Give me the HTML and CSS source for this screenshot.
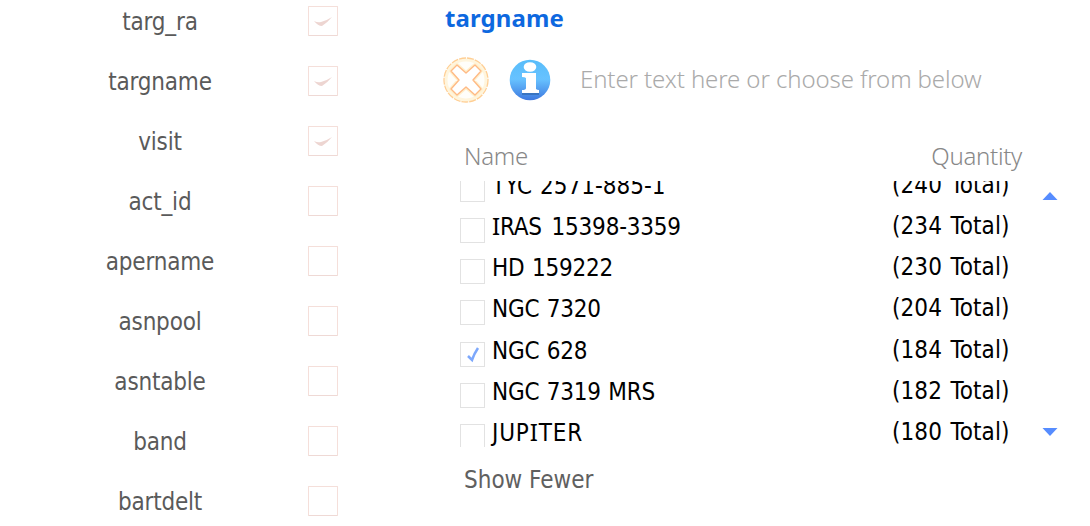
FILE: index.html
```html
<!DOCTYPE html>
<html lang="en">
<head>
<meta charset="utf-8">
<title>Column filters</title>
<link rel="stylesheet" href="styles.css">
</head>
<body>
<main class="page">
  <section class="columns">
    <div class="column-row"><span class="column-name">targ_ra</span><span class="box"><svg viewBox="0 0 28 28"><path class="tick" d="M5 14q4 2 7 1 5-1 11-5-4 5-10 9-4 0-8-5z"/></svg></span></div>
    <div class="column-row"><span class="column-name">targname</span><span class="box"><svg viewBox="0 0 28 28"><path class="tick" d="M5 14q4 2 7 1 5-1 11-5-4 5-10 9-4 0-8-5z"/></svg></span></div>
    <div class="column-row"><span class="column-name">visit</span><span class="box"><svg viewBox="0 0 28 28"><path class="tick" d="M5 14q4 2 7 1 5-1 11-5-4 5-10 9-4 0-8-5z"/></svg></span></div>
    <div class="column-row"><span class="column-name">act_id</span><span class="box"></span></div>
    <div class="column-row"><span class="column-name">apername</span><span class="box"></span></div>
    <div class="column-row"><span class="column-name">asnpool</span><span class="box"></span></div>
    <div class="column-row"><span class="column-name">asntable</span><span class="box"></span></div>
    <div class="column-row"><span class="column-name">band</span><span class="box"></span></div>
    <div class="column-row"><span class="column-name">bartdelt</span><span class="box"></span></div>
  </section>
  <section class="filter">
    <h1 class="title">targname</h1>
    <div class="search">
      <svg class="clear" viewBox="0 0 46 46">
        <circle class="clear-glow" cx="23" cy="23" r="20"/>
        <circle class="clear-ring" cx="23" cy="23" r="22"/>
        <path class="clear-halo" d="M14 8l9 8 9-8 6 6-8 9 8 9-6 6-9-8-9 8-6-6 8-9-8-9z"/>
        <path class="clear-cross" d="M14 8l9 8 9-8 6 6-8 9 8 9-6 6-9-8-9 8-6-6 8-9-8-9z"/>
      </svg>
      <svg class="info" viewBox="0 0 42 42">
        <defs><linearGradient id="blue" x2="0" y2="1"><stop offset="0" stop-color="#58bdfa"/><stop offset=".48" stop-color="#67c2ff"/><stop offset="1" stop-color="#3e78df"/></linearGradient></defs>
        <circle cx="21" cy="21" r="20.3" fill="url(#blue)"/>
        <path class="info-shadow" d="M13 34h17v2H13z"/>
        <ellipse class="info-mark" cx="21" cy="8" rx="6.3" ry="4.8"/>
        <path class="info-mark" d="M13 14h14v16q1 1 3 1v3H13v-3q4 0 4-2V19q-1-1-4-1z"/>
      </svg>
      <span class="placeholder">Enter text here or choose from below</span>
    </div>
    <div class="table-head"><span class="head-name">Name</span><span class="head-quantity">Quantity</span></div>
    <div class="viewport">
      <div class="rows">
        <div class="row"><span class="check"></span><span class="name">TYC 2571-885-1</span><span class="total">(240 Total)</span></div>
        <div class="row"><span class="check"></span><span class="name iras"><span class="slab">I</span>RAS 15398-3359</span><span class="total">(234 Total)</span></div>
        <div class="row"><span class="check"></span><span class="name tight">HD 159222</span><span class="total">(230 Total)</span></div>
        <div class="row"><span class="check"></span><span class="name tight">NGC 7320</span><span class="total">(204 Total)</span></div>
        <div class="row"><span class="check"><svg viewBox="0 0 23 23"><path class="blue-tick" d="M7 13l4 4q2-6 6-12"/></svg></span><span class="name tight">NGC 628</span><span class="total">(184 Total)</span></div>
        <div class="row"><span class="check"></span><span class="name tight">NGC 7319 MRS</span><span class="total">(182 Total)</span></div>
        <div class="row"><span class="check"></span><span class="name jupiter">JUP<span class="slab">I</span>TER</span><span class="total">(180 Total)</span></div>
      </div>
      <div class="scroll">
        <svg class="arrow" viewBox="0 0 16 8"><path d="M8 0l7.5 8H.5z"/></svg>
        <svg class="arrow" viewBox="0 0 16 8"><path d="M8 8L.5 0h15z"/></svg>
      </div>
    </div>
    <div class="fewer">Show Fewer</div>
  </section>
</main>
</body>
</html>
```
FILE: styles.css
```css
* { box-sizing: border-box; }
body { margin: 0; background: #fefefe; font: 24px/30px "DejaVu Sans Condensed", "Noto Sans", sans-serif; }
.page { display: grid; grid-template-columns: 443px 647px; height: 526px; overflow: hidden; background: #fff; }
svg { display: block; }
.columns { padding-top: 6px; display: flex; flex-direction: column; gap: 30px; }
.column-row { display: flex; height: 30px; flex: none; color: #5a5a5a; }
.column-name { width: 148px; margin: 0 74px 0 86px; line-height: 32px; letter-spacing: -.2px; text-align: center; white-space: nowrap; }
.box { width: 30px; height: 30px; border: 1px solid #f5dfda; border-bottom-color: #efd9d5; border-radius: 1px; }
.box svg { width: 28px; height: 28px; }
.tick { fill: #edd5d1; }
.title { margin: 3px 0 0 2px; font: bold 24px/30px "Noto Sans", sans-serif; letter-spacing: .1px; color: #0d68df; }
.search { display: flex; align-items: center; height: 46px; margin-top: 24px; }
.clear { width: 46px; height: 46px; }
.clear-glow { fill: #fffefa; stroke: #fff5dd; stroke-width: 3; }
.clear-ring { fill: none; stroke: #ffcf94; stroke-width: 1.3; stroke-dasharray: 7 1; }
.clear-halo { fill: #fff; stroke: #fff1cf; stroke-width: 4; stroke-linejoin: round; }
.clear-cross { fill: #fff; stroke: #ffba85; stroke-width: 1.4; stroke-linejoin: round; }
.info { width: 42px; height: 42px; margin-left: 20px; }
.info-mark { fill: #fff; }
.info-shadow { fill: #3974c1; }
.placeholder { margin: 0 0 2px 29px; color: #aaa; font-family: "Noto Sans", sans-serif; font-weight: 300; letter-spacing: -.11px; white-space: nowrap; }
.table-head { display: flex; justify-content: space-between; margin: 38px 68px 0 21px; color: #888; font-family: "Noto Sans", sans-serif; font-weight: 300; letter-spacing: -.3px; }
.viewport { display: flex; height: 266px; margin-top: 10px; overflow: hidden; }
.rows { width: 590px; margin-top: -16px; }
.row { display: flex; height: 41.17px; padding-left: 17px; color: #000; }
.check { width: 25px; height: 25px; flex: none; margin-top: 12px; border: 1px solid #e2e2e2; }
.check svg { width: 23px; height: 23px; }
.blue-tick { fill: none; stroke: #7da8fc; stroke-width: 2.5; }
.name { width: 399px; margin-left: 7px; line-height: 42px; word-spacing: 1px; white-space: nowrap; }
.tight { letter-spacing: -.25px; }
.iras { letter-spacing: -.2px; word-spacing: 3px; }
.jupiter { letter-spacing: .85px; }
.slab { font-family: "Noto Sans", sans-serif; line-height: 1; }
.total { margin-left: 1px; line-height: 41px; letter-spacing: .1px; word-spacing: 1.5px; white-space: nowrap; }
.scroll { display: flex; flex-direction: column; justify-content: space-between; padding: 11px 0; margin-left: 9px; }
.arrow { width: 16px; height: 8px; fill: #568cff; }
.fewer { margin: 18px 0 0 21px; color: #606060; }
```
